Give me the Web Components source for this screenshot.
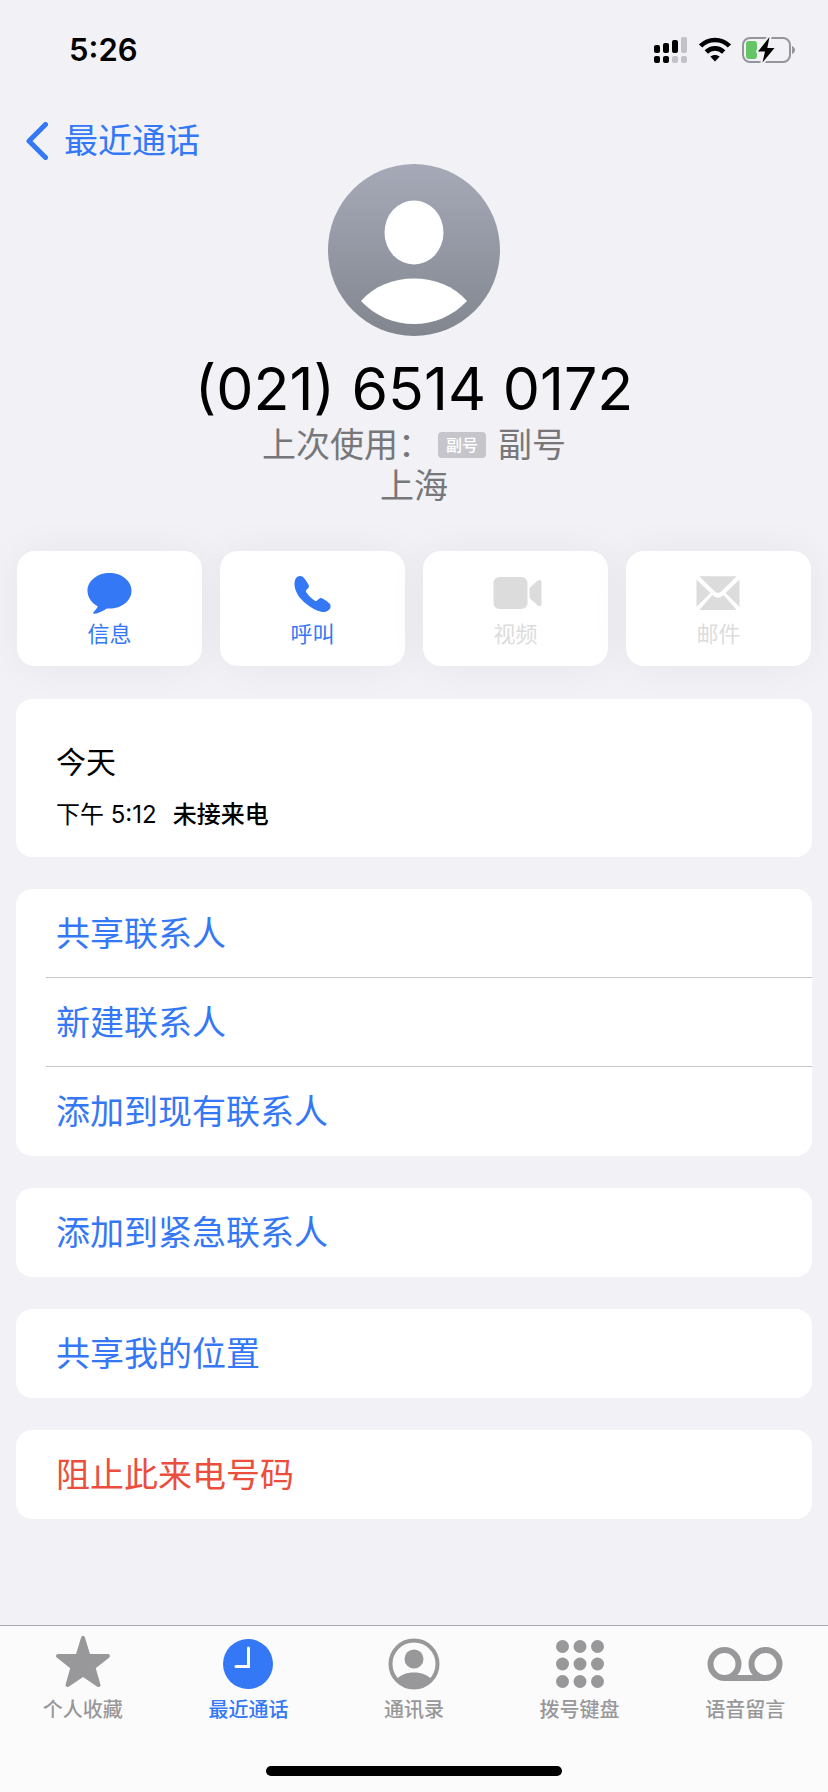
<!DOCTYPE html>
<html lang="zh-CN">
<head>
<meta charset="utf-8">
<meta name="viewport" content="width=device-width, initial-scale=1">
<title>最近通话</title>
<style>
  body {
    --accent: #3478f6;
    --danger: #eb4e3d;
    --page: #f1f1f6;
    background-color: var( --page );
    color: #000000;
    font-family: Inter, 'Noto Sans CJK SC', sans-serif;
    margin: 0;
  }
</style>
</head>
<body>

<phone-app>
  <phone-status slot="status" time="5:26"></phone-status>
  <phone-back label="最近通话"></phone-back>
  <phone-contact>
    (021) 6514 0172
    <span slot="used">上次使用：</span>
    <span slot="badge">副号</span>
    <span slot="line">副号</span>
    <span slot="place">上海</span>
  </phone-contact>
  <phone-actions>
    <phone-action icon="message">信息</phone-action>
    <phone-action icon="call">呼叫</phone-action>
    <phone-action icon="video" disabled>视频</phone-action>
    <phone-action icon="mail" disabled>邮件</phone-action>
  </phone-actions>
  <phone-card>
    <phone-call time="下午 5:12" status="未接来电">今天</phone-call>
  </phone-card>
  <phone-card>
    <phone-row>共享联系人</phone-row>
    <phone-row>新建联系人</phone-row>
    <phone-row>添加到现有联系人</phone-row>
  </phone-card>
  <phone-card>
    <phone-row>添加到紧急联系人</phone-row>
  </phone-card>
  <phone-card>
    <phone-row>共享我的位置</phone-row>
  </phone-card>
  <phone-card>
    <phone-row danger>阻止此来电号码</phone-row>
  </phone-card>
  <phone-tabs slot="tabs">
    <phone-tab icon="star">个人收藏</phone-tab>
    <phone-tab icon="clock" selected>最近通话</phone-tab>
    <phone-tab icon="person">通讯录</phone-tab>
    <phone-tab icon="keypad">拨号键盘</phone-tab>
    <phone-tab icon="voicemail">语音留言</phone-tab>
  </phone-tabs>
</phone-app>

<script>
// Shared drawing, everything picks up currentColor
const ACTION_ICONS = {
  message: `
    <path fill="currentColor" d="M25.5 1C37.6 1 47.5 8.800 47.500 18.700C47.500 28.700 37.600 36.500 25.500 36.500L23 36.500C19.500 38.500 14.500 41.700 10.500 41.800C9 41.800 8.900 40.600 9.800 39.700C11.400 38 13 36.300 13.800 34.200C7.600 31 3.500 25.300 3.500 18.700C3.500 8.800 13.400 1 25.500 1Z"/>`,
  call: `
    <path fill="currentColor" d="M9.600 5.400C11.200 4 13.600 3.400 15.400 4.600C17.500 6.200 19.800 10 21.400 12.400C22.300 13.800 22 15.200 21 16.200L19.300 18C18.700 18.700 18.800 19.400 19.300 20.200C21.300 23.400 24.700 26.700 27.900 28.800C28.700 29.300 29.400 29.200 30 28.600L31.800 26.900C32.800 25.900 34.200 25.600 35.600 26.500C38 28 41.300 30.200 42.800 31.800C44.200 33.500 43.700 36 42.400 37.500C40.500 39.400 37.700 40.400 35 40C28.800 39 20.700 34.200 14.500 27.600C10.600 23.200 7.500 17.500 7.500 12.200C7.500 9.300 8.100 6.900 9.600 5.400Z"/>`,
  video: `
    <rect fill="currentColor" x="3.500" y="5" width="34" height="32" rx="6"/>
    <path fill="currentColor" d="M39.500 17.500C39.500 16.200 40 15.400 41 14.500L47.500 8.800C49.500 7.200 51.500 7.800 51.500 10V32C51.500 34.200 49.500 34.800 47.500 33.200L41 27.500C40 26.600 39.500 25.800 39.500 24.500Z"/>`,
  mail: `
    <path fill="currentColor" d="M6.300 4.300H43.700L28.500 19.300C26.200 21.600 23.800 21.600 21.500 19.300Z"/>
    <path fill="currentColor" d="M3.500 7.500L17.500 21L3.500 34.800Z"/>
    <path fill="currentColor" d="M46.500 7.500L32.500 21L46.500 34.800Z"/>
    <path fill="currentColor" d="M6.300 38L19.500 23C23 26.500 27 26.500 30.500 23L43.700 38Z"/>`
};

const TAB_ICONS = {
  star: `
    <path fill="currentColor" stroke="currentColor" stroke-width="4" stroke-linejoin="round" d="M40 2L45.500 20H65L50.500 31.500L55.500 49L40 38.500L24.500 49L29.500 31.500L15 20H34.500Z"/>`,
  clock: `
    <circle fill="currentColor" cx="40" cy="28" r="25"/>
    <path fill="none" stroke="#ffffff" stroke-width="3" stroke-linecap="round" stroke-linejoin="miter" d="M40.500 12V30.500H28"/>`,
  person: `
    <clipPath id="ring"><circle cx="40" cy="28" r="24"/></clipPath>
    <circle fill="none" stroke="currentColor" stroke-width="4" cx="40" cy="28" r="23.500"/>
    <circle fill="currentColor" cx="40" cy="23" r="9.500"/>
    <path clip-path="url(#ring)" fill="currentColor" d="M22 44C26 39 32 36.500 40 36.500S54 39 58 44V54H22Z"/>`,
  keypad: [10.5, 28, 45.5].map( ( y ) => [22.5, 40, 57.5].map( ( x ) => `
    <circle fill="currentColor" cx="${x}" cy="${y}" r="6.500"/>` ).join( '' ) ).join( '' ),
  voicemail: `
    <g fill="none" stroke="currentColor" stroke-width="6">
      <circle cx="19.500" cy="28" r="14"/>
      <circle cx="60.500" cy="28" r="14"/>
      <path d="M19.500 42H60.500"/>
    </g>`
};

class PhoneElement extends HTMLElement {
  constructor() {
    super();

    const template = document.createElement( 'template' );
    template.innerHTML = this.template();

    // Root
    this.attachShadow( {mode: 'open'} );
    this.shadowRoot.appendChild( template.content.cloneNode( true ) );
  }
}

class PhoneApp extends PhoneElement {
  template() {
    return /* template */ `
      <style>
        :host {
          display: flex;
          flex-direction: column;
          min-height: 100vh;
        }

        main {
          flex-grow: 1;
          padding-bottom: 32px;
        }
      </style>
      <slot name="status"></slot>
      <main><slot></slot></main>
      <slot name="tabs"></slot>
    `;
  }
}

class PhoneStatus extends PhoneElement {
  template() {
    return /* template */ `
      <style>
        :host {
          align-items: center;
          box-sizing: border-box;
          display: flex;
          gap: 11px;
          height: 100px;
          padding: 0 32px 0 69px;
        }

        span {
          flex-grow: 1;
          font-size: 31px;
          font-weight: 600;
          line-height: 40px;
        }

        svg {
          display: block;
        }
      </style>
      <span>${this.getAttribute( 'time' )}</span>
      <svg width="34" height="26" viewBox="0 0 34 26">
        <rect x="0" y="8" width="6" height="8" rx="2"/>
        <rect x="9" y="6" width="6" height="10" rx="2"/>
        <rect x="18" y="3" width="6" height="13" rx="2"/>
        <rect x="27" y="0" width="6" height="16" rx="2" fill="#c2c1c7"/>
        <rect x="0" y="19" width="6" height="7" rx="2"/>
        <rect x="9" y="19" width="6" height="7" rx="2"/>
        <rect x="18" y="19" width="6" height="7" rx="2" fill="#c2c1c7"/>
        <rect x="27" y="19" width="6" height="7" rx="2" fill="#c2c1c7"/>
      </svg>
      <svg width="32" height="26" viewBox="0 0 32 26">
        <path fill="none" stroke="#000000" stroke-width="4.600" d="M1.600 9C9.500 1 22.500 1 30.400 9"/>
        <path fill="none" stroke="#000000" stroke-width="4.600" d="M7.300 15C12.200 10.200 19.800 10.200 24.700 15"/>
        <path d="M11.300 19.600C14 17.400 18 17.400 20.700 19.600L16 24.500Z"/>
      </svg>
      <svg width="54" height="26" viewBox="0 0 54 26">
        <rect fill="none" stroke="#96959b" stroke-width="2" x="1" y="1" width="47" height="24" rx="7"/>
        <path fill="#96959b" d="M50 9C54 10.500 54 15.500 50 17Z"/>
        <rect fill="#65c466" x="4" y="4" width="11" height="18" rx="3"/>
        <path stroke="#f1f1f6" stroke-width="4" stroke-linejoin="round" paint-order="stroke" d="M27.500 0L16 14.500H23L20.500 25.500L32.500 11H25.300Z"/>
      </svg>
    `;
  }
}

class PhoneBack extends PhoneElement {
  template() {
    return /* template */ `
      <style>
        :host {
          display: flex;
          padding: 21px 26px 3px 26px;
        }

        a {
          align-items: center;
          color: var( --accent );
          display: flex;
          font-size: 34px;
          gap: 16px;
          line-height: 40px;
          text-decoration: none;
        }
      </style>
      <a href="#recents">
        <svg width="22" height="38" viewBox="0 0 22 38">
          <path fill="none" stroke="currentColor" stroke-width="5" stroke-linecap="round" stroke-linejoin="round" d="M19.500 2.500L3 19L19.500 35.500"/>
        </svg>
        ${this.getAttribute( 'label' )}
      </a>
    `;
  }
}

class PhoneContact extends PhoneElement {
  template() {
    return /* template */ `
      <style>
        :host {
          align-items: center;
          display: flex;
          flex-direction: column;
          text-align: center;
        }

        h1 {
          font-size: 59px;
          font-weight: 400;
          line-height: 71px;
          margin: 17px 0 0 0;
        }

        p {
          align-items: center;
          color: #777779;
          display: flex;
          font-size: 34px;
          line-height: 41px;
          margin: 0;
        }

        .badge {
          background-color: #c6c5cb;
          border-radius: 4px;
          color: #ffffff;
          font-size: 16px;
          font-weight: 500;
          line-height: 26px;
          margin: 0 12px 0 6px;
          padding: 0 8px;
        }
      </style>
      <svg width="172" height="172" viewBox="0 0 172 172">
        <linearGradient id="shade" x1="0" y1="0" x2="0" y2="1">
          <stop offset="0" stop-color="#a6aab8"/>
          <stop offset="1" stop-color="#82868f"/>
        </linearGradient>
        <circle fill="url(#shade)" cx="86" cy="86" r="86"/>
        <ellipse fill="#ffffff" cx="86" cy="68.500" rx="29.500" ry="32"/>
        <path fill="#ffffff" d="M33 137C46 122 65 114.500 86 114.500S126 122 139 137C125 152 106 160 86 160S47 152 33 137Z"/>
      </svg>
      <h1><slot></slot></h1>
      <p>
        <slot name="used"></slot>
        <span class="badge"><slot name="badge"></slot></span>
        <slot name="line"></slot>
      </p>
      <p><slot name="place"></slot></p>
    `;
  }
}

class PhoneActions extends PhoneElement {
  template() {
    return /* template */ `
      <style>
        :host {
          display: grid;
          gap: 18px;
          grid-template-columns: repeat( 4, 1fr );
          margin: 45px 17px 33px 17px;
        }
      </style>
      <slot></slot>
    `;
  }
}

class PhoneAction extends PhoneElement {
  template() {
    return /* template */ `
      <style>
        :host {
          display: flex;
        }

        button {
          align-items: center;
          appearance: none;
          background-color: #ffffff;
          border: none;
          border-radius: 18px;
          box-shadow: 0 0 40px rgba( 0, 0, 0, 0.05 );
          color: var( --accent );
          cursor: pointer;
          display: flex;
          flex-direction: column;
          flex-grow: 1;
          font-family: inherit;
          font-size: 22px;
          gap: 5px;
          line-height: 30px;
          margin: 0;
          padding: 21px 0 17px 0;
        }

        button:disabled {
          color: #dcdcdc;
          cursor: default;
        }
      </style>
      <button type="button" ${this.hasAttribute( 'disabled' ) ? 'disabled' : ''}>
        <svg width="52" height="42" viewBox="0 0 52 42">${ACTION_ICONS[this.getAttribute( 'icon' )]}</svg>
        <slot></slot>
      </button>
    `;
  }
}

class PhoneCard extends PhoneElement {
  template() {
    return /* template */ `
      <style>
        :host {
          background-color: #ffffff;
          border-radius: 16px;
          display: flex;
          flex-direction: column;
          margin: 0 16px 32px 16px;
          overflow: hidden;
          position: relative;
        }
      </style>
      <slot></slot>
    `;
  }
}

class PhoneCall extends PhoneElement {
  template() {
    return /* template */ `
      <style>
        :host {
          display: flex;
          flex-direction: column;
          gap: 17px;
          padding: 45px 40px 24px 40px;
        }

        h2 {
          font-size: 30px;
          font-weight: 400;
          line-height: 36px;
          margin: 0;
        }

        p {
          display: flex;
          font-size: 24px;
          gap: 16px;
          line-height: 36px;
          margin: 0;
        }

        strong {
          font-weight: 500;
        }
      </style>
      <h2><slot></slot></h2>
      <p>
        <span>${this.getAttribute( 'time' )}</span>
        <strong>${this.getAttribute( 'status' )}</strong>
      </p>
    `;
  }
}

class PhoneRow extends PhoneElement {
  template() {
    return /* template */ `
      <style>
        :host {
          display: flex;
          padding-left: 30px;
        }

        button {
          appearance: none;
          background: none;
          border: none;
          border-bottom: 1px solid #c6c6c8;
          color: var( --accent );
          cursor: pointer;
          flex-grow: 1;
          font-family: inherit;
          font-size: 34px;
          line-height: 86px;
          margin: 0;
          padding: 2px 0 0 10px;
          text-align: left;
        }

        :host( :last-child ) button {
          border-bottom-color: transparent;
        }

        :host( [danger] ) button {
          color: var( --danger );
        }
      </style>
      <button type="button"><slot></slot></button>
    `;
  }
}

class PhoneTabs extends PhoneElement {
  template() {
    return /* template */ `
      <style>
        :host {
          background-color: #fbfbfc;
          border-top: 1px solid #a9a9ad;
          display: flex;
          flex-direction: column;
          gap: 42px;
          padding: 10px 0 16px 0;
        }

        nav {
          display: grid;
          grid-template-columns: repeat( 5, 1fr );
        }

        /* Home indicator */
        div {
          align-self: center;
          background-color: #000000;
          border-radius: 5px;
          height: 10px;
          width: 296px;
        }
      </style>
      <nav><slot></slot></nav>
      <div></div>
    `;
  }
}

class PhoneTab extends PhoneElement {
  template() {
    const icon = this.getAttribute( 'icon' );

    return /* template */ `
      <style>
        :host {
          color: #98989a;
          display: flex;
          justify-content: center;
        }

        :host( [selected] ) {
          color: var( --accent );
        }

        a {
          align-items: center;
          color: inherit;
          display: flex;
          flex-direction: column;
          font-size: 20px;
          font-weight: 500;
          gap: 4px;
          line-height: 28px;
          text-decoration: none;
        }
      </style>
      <a href="#${icon}">
        <svg width="80" height="56" viewBox="0 0 80 56">${TAB_ICONS[icon]}</svg>
        <slot></slot>
      </a>
    `;
  }
}

window.customElements.define( 'phone-app', PhoneApp );
window.customElements.define( 'phone-status', PhoneStatus );
window.customElements.define( 'phone-back', PhoneBack );
window.customElements.define( 'phone-contact', PhoneContact );
window.customElements.define( 'phone-actions', PhoneActions );
window.customElements.define( 'phone-action', PhoneAction );
window.customElements.define( 'phone-card', PhoneCard );
window.customElements.define( 'phone-call', PhoneCall );
window.customElements.define( 'phone-row', PhoneRow );
window.customElements.define( 'phone-tabs', PhoneTabs );
window.customElements.define( 'phone-tab', PhoneTab );
</script>
</body>
</html>
